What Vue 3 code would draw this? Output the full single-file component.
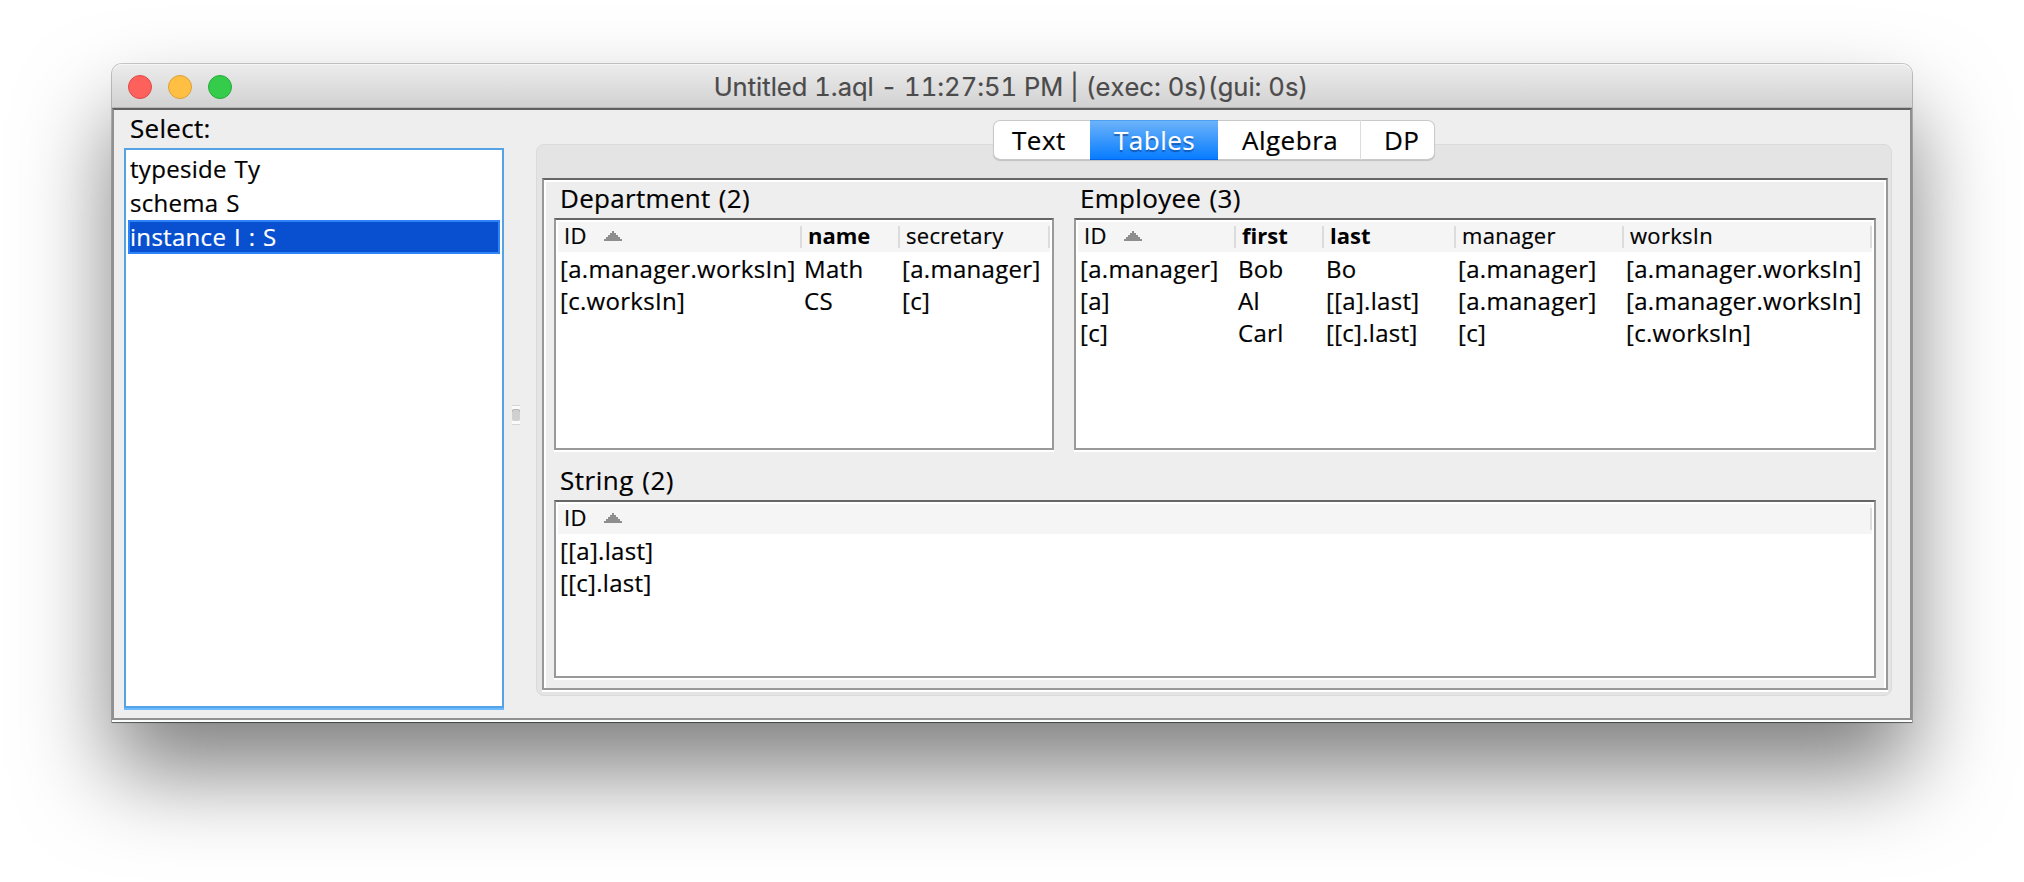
<script setup>
const entries = ['typeside Ty', 'schema S', 'instance I : S']
const selected = 2
const tabs = ['Text', 'Tables', 'Algebra', 'DP']

const department = {
  name: 'department',
  title: 'Department (2)',
  columns: [{ label: 'ID', sorted: true }, { label: 'name', bold: true }, { label: 'secretary' }],
  rows: [
    ['[a.manager.worksIn]', 'Math', '[a.manager]'],
    ['[c.worksIn]', 'CS', '[c]'],
  ],
}
const employee = {
  name: 'employee',
  title: 'Employee (3)',
  columns: [
    { label: 'ID', sorted: true },
    { label: 'first', bold: true },
    { label: 'last', bold: true },
    { label: 'manager' },
    { label: 'worksIn' },
  ],
  rows: [
    ['[a.manager]', 'Bob', 'Bo', '[a.manager]', '[a.manager.worksIn]'],
    ['[a]', 'Al', '[[a].last]', '[a.manager]', '[a.manager.worksIn]'],
    ['[c]', 'Carl', '[[c].last]', '[c]', '[c.worksIn]'],
  ],
}
const string = {
  name: 'string',
  title: 'String (2)',
  columns: [{ label: 'ID', sorted: true }],
  rows: [['[[a].last]'], ['[[c].last]']],
}
const tables = [department, employee, string]
</script>

<template>
  <div class="desktop">
    <div class="window">
      <header class="titlebar">
        <div class="lights">
          <i class="light close"></i><i class="light minimise"></i><i class="light zoom"></i>
        </div>
        <span class="title">Untitled 1.aql - 11:27:51 PM | (exec: 0s)(gui: 0s)</span>
      </header>

      <main class="content">
        <aside class="sidebar">
          <div class="caption">Select:</div>
          <div class="list">
            <div v-for="(e, i) in entries" :key="e" class="entry" :class="{ chosen: i === selected }">{{ e }}</div>
          </div>
        </aside>

        <div class="divider">
          <svg class="grip" width="8" height="20" viewBox="0 0 8 20">
            <path d="M0 .5h8M0 19.5h8" stroke="#d6d6d6" />
            <path d="M0 1h8v3H0zM0 16h8v3H0z" fill="#fafafa" />
            <rect x="0" y="4" width="8" height="12" rx="2.5" fill="#d0d0d0" />
            <path d="M0 7q0-2.5 2.500-2.500h3q2.500 0 2.500 2.500" fill="none" stroke="#b4b4b4" />
          </svg>
        </div>

        <section class="viewer">
          <nav class="tabs">
            <div v-for="t in tabs" :key="t" class="tab" :class="['tab-' + t.toLowerCase(), { active: t === 'Tables' }]">{{ t }}</div>
          </nav>
          <div class="pane">
            <div class="board">
              <div v-for="t in tables" :key="t.name" class="block" :class="t.name">
                <div class="heading">{{ t.title }}</div>
                <div class="table">
                  <div class="row head">
                    <div v-for="c in t.columns" :key="c.label" class="th" :class="{ bold: c.bold }">
                      <span :class="{ sorted: c.sorted }">{{ c.label }}</span>
                      <svg v-if="c.sorted" width="18" height="10" viewBox="0 0 18 10">
                        <path d="M8 0h2v2h2v2h2v2h2v2h2v2H0V8h2V6h2V4h2V2h2z" fill="#8e8e8e" />
                      </svg>
                    </div>
                  </div>
                  <div v-for="(r, i) in t.rows" :key="i" class="row">
                    <div v-for="(cell, j) in r" :key="j" class="td">{{ cell }}</div>
                  </div>
                </div>
              </div>
            </div>
          </div>
        </section>
      </main>
    </div>
  </div>
</template>

<style>
body {
  background: #fff;
  overflow: hidden;
}
</style>

<style scoped>
* {
  box-sizing: border-box;
}
.desktop {
  height: 882px;
  padding: 64px 112px 0;
  font-family: 'Open Sans', 'Noto Sans', sans-serif;
  font-kerning: none;
  letter-spacing: 0.3px;
  word-spacing: 1.2px;
  -webkit-text-stroke: 0.2px;
  color: #000;
  white-space: nowrap;
  overflow: hidden;
}
.window {
  width: 1800px;
  height: 658px;
  display: flex;
  flex-direction: column;
  border-radius: 10px 10px 0 0;
  box-shadow:
    0 0 0 1px rgba(0, 0, 0, 0.2),
    0 1px 1px rgba(0, 0, 0, 0.4),
    0 50px 90px rgba(0, 0, 0, 0.5);
}
.titlebar {
  height: 44px;
  display: grid;
  grid-template-columns: 1fr auto 1fr;
  align-items: center;
  border-radius: 10px 10px 0 0;
  background: linear-gradient(#ececec, #d1d1d1);
  box-shadow: inset 0 1px #f6f6f6, inset 0 -1px #b6b6b6;
}
.lights {
  display: flex;
  gap: 16px;
  padding-left: 16px;
}
.light {
  width: 24px;
  height: 24px;
  border-radius: 50%;
  border: 1px solid;
}
.close {
  background: #fe605c;
  border-color: #e0494a;
}
.minimise {
  background: #ffbf42;
  border-color: #dfa03a;
}
.zoom {
  background: #35cb4b;
  border-color: #25ad38;
}
.title {
  font-family: Inter, Roboto, sans-serif;
  font-size: 25.5px;
  font-variant-numeric: tabular-nums;
  letter-spacing: 0.02px;
  word-spacing: 0;
  line-height: 44px;
  padding: 1px 2px 0 0;
  color: #4b4b4b;
}
.content {
  flex: 1;
  display: flex;
  background: #eee;
  border: 2px solid #909090;
  border-top-color: #606060;
  margin-bottom: 2px;
  padding: 0 18px 0 10px;
  box-shadow: 0 2px #f9fdfc;
}
.sidebar {
  width: 380px;
  padding-bottom: 8px;
  display: flex;
  flex-direction: column;
}
.caption {
  font-size: 26px;
  line-height: 36px;
  height: 38px;
  padding-left: 6px;
}
.list {
  flex: 1;
  background: #fff;
  border: 2px solid #55a3e5;
  box-shadow: 0 2px #69b9ff;
  margin-bottom: 2px;
  padding: 2px;
}
.entry {
  height: 34px;
  line-height: 34px;
  font-size: 24px;
  padding-left: 2px;
}
.chosen {
  line-height: 30px;
  padding-left: 0;
  color: #fff;
  background: #0850d0;
  border: 2px solid #2f83f8;
}
.divider {
  width: 32px;
  padding: 295px 0 0 8px;
}
.grip {
  display: block;
}
.viewer {
  flex: 1;
  display: flex;
  flex-direction: column;
  padding: 10px 0 22px;
}
.tabs {
  align-self: center;
  display: flex;
  height: 40px;
  width: 442px;
  margin-bottom: -16px;
  position: relative;
  z-index: 1;
  background: #fff;
  border-radius: 7px;
  box-shadow: inset 0 0 0 1px #c9c9c9, inset 0 -1px #a8a8a8, 0 1px 1px rgba(0, 0, 0, 0.15);
}
.tab {
  font-size: 26px;
  line-height: 40px;
  letter-spacing: 0.5px;
}
.tab-text {
  width: 97px;
  padding-left: 19px;
}
.tab-tables {
  width: 128px;
  padding-left: 24px;
}
.tab-algebra {
  width: 143px;
  padding-left: 24px;
  border-right: 1px solid #dcdcdc;
}
.tab-dp {
  padding-left: 23px;
}
.active {
  color: #fff;
  background: linear-gradient(#6eb4fa, #057bff);
  box-shadow: inset 0 1px #4d9ff2, inset 0 -1px #0063ec;
  text-shadow: 0 2px 1px rgba(0, 40, 110, 0.5);
}
.pane {
  flex: 1;
  display: flex;
  padding: 33px 3px 5px 5px;
  background: #e4e4e4;
  border: 1px solid #dadada;
  border-radius: 8px;
}
.board {
  flex: 1;
  display: grid;
  grid-template-columns: 500px 802px;
  grid-template-rows: 268px 228px;
  column-gap: 20px;
  background: #eee;
  border: 2px solid #999;
  border-top-color: #666;
  box-shadow: inset 0 2px #fff, inset 2px 0 #fff, inset -2px 0 #fff, 0 2px #fff;
  padding: 2px 10px 10px;
}
.block {
  display: flex;
  flex-direction: column;
}
.heading {
  font-size: 26px;
  line-height: 32px;
  height: 36px;
  padding-left: 6px;
}
.table {
  flex: 1;
  background: #fff;
  border: 2px solid #999;
  border-top-color: #666;
  box-shadow: 0 2px #fff;
  padding: 2px;
}
.string {
  grid-column: 1 / 3;
  padding-top: 14px;
}
.string .heading {
  letter-spacing: 0.5px;
}
.row {
  display: grid;
  height: 32px;
}
.department .row {
  grid-template-columns: 244px 98px 150px;
}
.employee .row {
  grid-template-columns: 158px 88px 132px 168px 248px;
}
.head {
  height: 30px;
  margin-bottom: 1px;
  background: #f5f5f5;
}
.th {
  display: flex;
  align-items: center;
  font-size: 22px;
  line-height: 27px;
  padding: 0 0 3px 6px;
  background: linear-gradient(#dcdcdc, #dcdcdc) right 4px / 2px 22px no-repeat;
}
.bold {
  font-weight: 700;
  letter-spacing: 0;
  -webkit-text-stroke: 0;
}
.sorted {
  width: 40px;
}
.td {
  font-size: 24px;
  line-height: 32px;
  padding-left: 2px;
}
</style>
